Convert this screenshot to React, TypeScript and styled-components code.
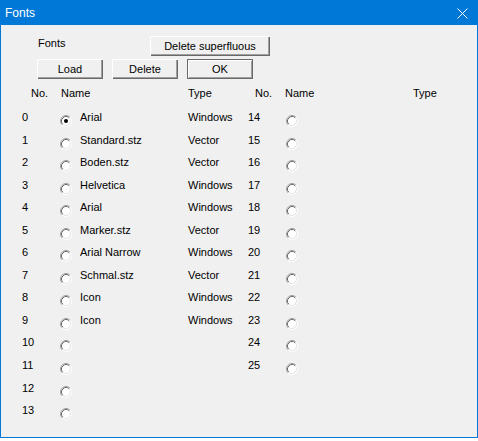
import React from 'react';
import styled, { createGlobalStyle } from 'styled-components';

const GlobalStyle = createGlobalStyle`
    html, body {
        margin: 0;
        padding: 0;
        background: #ffffff;
    }
    body {
        font-family: "Liberation Sans", Arial, sans-serif;
        font-size: 11px;
        color: #000000;
    }
`;

const Window = styled.div`
    width: 478px;
    height: 438px;
    box-sizing: border-box;
    display: flex;
    flex-direction: column;
    border: 1px solid #0078d7;
    border-top: none;
    background: #f0f0f0;
`;

const TitleBar = styled.div`
    height: 25px;
    margin: 0 -1px;
    flex-shrink: 0;
    display: flex;
    align-items: center;
    justify-content: space-between;
    padding: 0 10px 0 5px;
    background: #0078d7;
    color: #ffffff;
    font-size: 12px;
    line-height: 14px;
`;

const CloseIcon = styled.svg`
    display: block;
    margin-top: 1px;
`;

const Body = styled.div`
    flex: 1;
    padding: 11px 21px 0 21px;
`;

const Toolbar = styled.div`
    margin-left: 15px;
    display: flex;
    flex-direction: column;
    gap: 3px;
`;

const ToolRow = styled.div`
    display: flex;
    align-items: flex-start;
`;

const Label = styled.span`
    width: 112px;
    margin: 1px 0 0 1px;
    line-height: 13px;
`;

interface ButtonProps {
    $width: number;
    $isDefault?: boolean;
}

const Button = styled.div<ButtonProps>`
    width: ${props => props.$width}px;
    height: 20px;
    box-sizing: border-box;
    display: flex;
    align-items: center;
    justify-content: center;
    background: #f0f0f0;
    line-height: 13px;
    border: ${props => props.$isDefault ? '1px solid #696969' : 'none'};
    box-shadow: ${props => props.$isDefault
        ? 'inset 1px 1px #ffffff, inset -1px -1px #a0a0a0'
        : 'inset 1px 1px #ffffff, inset -1px -1px #696969, inset -2px -2px #a0a0a0'};
`;

const ButtonRow = styled.div`
    display: flex;
    gap: 9px;
`;

const HeaderRow = styled.div`
    margin-top: 8px;
    height: 24px;
    display: flex;
    padding-left: 9px;
    line-height: 13px;
`;

const HeaderCell = styled.span<{ $width: number }>`
    width: ${props => props.$width}px;
    flex-shrink: 0;
`;

const Columns = styled.div`
    display: flex;
    align-items: flex-start;
`;

const List = styled.div<{ $width?: number }>`
    display: flex;
    flex-direction: column;
    ${props => props.$width ? `width: ${props.$width}px;` : ''}
`;

const Row = styled.div`
    height: 22.55px;
    display: flex;
    align-items: flex-start;
    line-height: 13px;
`;

const NumCell = styled.span`
    width: 38px;
    flex-shrink: 0;
`;

const NameCell = styled.span`
    width: 108px;
    margin-left: 8px;
    flex-shrink: 0;
    white-space: nowrap;
`;

const TypeCell = styled.span`
    width: 60px;
    flex-shrink: 0;
`;

const RadioIcon = styled.svg`
    display: block;
    flex-shrink: 0;
    margin-top: 4px;
`;

const Radio: React.FC<{ checked?: boolean }> = ({ checked }) => (
    <RadioIcon width="12" height="12" viewBox="0 0 12 12">
        <circle cx="6" cy="6" r="5" fill="#ffffff" />
        <path d="M2.11 9.89 A5.5 5.5 0 0 1 9.89 2.11" fill="none" stroke="#a0a0a0" />
        <path d="M9.89 2.11 A5.5 5.5 0 0 1 2.11 9.89" fill="none" stroke="#ffffff" />
        <path d="M2.82 9.18 A4.5 4.5 0 0 1 9.18 2.82" fill="none" stroke="#696969" />
        <path d="M9.18 2.82 A4.5 4.5 0 0 1 2.82 9.18" fill="none" stroke="#e3e3e3" />
        {checked && <circle cx="6" cy="6" r="2" fill="#000000" />}
    </RadioIcon>
);

const fonts = [
    { name: 'Arial', type: 'Windows' },
    { name: 'Standard.stz', type: 'Vector' },
    { name: 'Boden.stz', type: 'Vector' },
    { name: 'Helvetica', type: 'Windows' },
    { name: 'Arial', type: 'Windows' },
    { name: 'Marker.stz', type: 'Vector' },
    { name: 'Arial Narrow', type: 'Windows' },
    { name: 'Schmal.stz', type: 'Vector' },
    { name: 'Icon', type: 'Windows' },
    { name: 'Icon', type: 'Windows' },
    { name: '', type: '' },
    { name: '', type: '' },
    { name: '', type: '' },
    { name: '', type: '' },
];

const rightNumbers = Array.from({ length: 12 }, (_, i) => 14 + i);

const App: React.FC = () => {
    return (
        <>
            <GlobalStyle />
            <Window>
                <TitleBar>
                    <span>Fonts</span>
                    <CloseIcon width="11" height="11" viewBox="0 0 11 11">
                        <path d="M0.5 0.5 L10.5 10.5 M10.5 0.5 L0.5 10.5" stroke="#ffffff" strokeWidth="1" />
                    </CloseIcon>
                </TitleBar>
                <Body>
                    <Toolbar>
                        <ToolRow>
                            <Label>Fonts</Label>
                            <Button $width={120}>Delete superfluous</Button>
                        </ToolRow>
                        <ButtonRow>
                            <Button $width={66}>Load</Button>
                            <Button $width={66}>Delete</Button>
                            <Button $width={66} $isDefault>OK</Button>
                        </ButtonRow>
                    </Toolbar>
                    <HeaderRow>
                        <HeaderCell $width={30}>No.</HeaderCell>
                        <HeaderCell $width={127}>Name</HeaderCell>
                        <HeaderCell $width={67}>Type</HeaderCell>
                        <HeaderCell $width={30}>No.</HeaderCell>
                        <HeaderCell $width={128}>Name</HeaderCell>
                        <HeaderCell $width={40}>Type</HeaderCell>
                    </HeaderRow>
                    <Columns>
                        <List $width={226}>
                            {fonts.map((f, i) => (
                                <Row key={i}>
                                    <NumCell>{i}</NumCell>
                                    <Radio checked={i === 0} />
                                    <NameCell>{f.name}</NameCell>
                                    <TypeCell>{f.type}</TypeCell>
                                </Row>
                            ))}
                        </List>
                        <List>
                            {rightNumbers.map(n => (
                                <Row key={n}>
                                    <NumCell>{n}</NumCell>
                                    <Radio />
                                </Row>
                            ))}
                        </List>
                    </Columns>
                </Body>
            </Window>
        </>
    );
};

export default App;
